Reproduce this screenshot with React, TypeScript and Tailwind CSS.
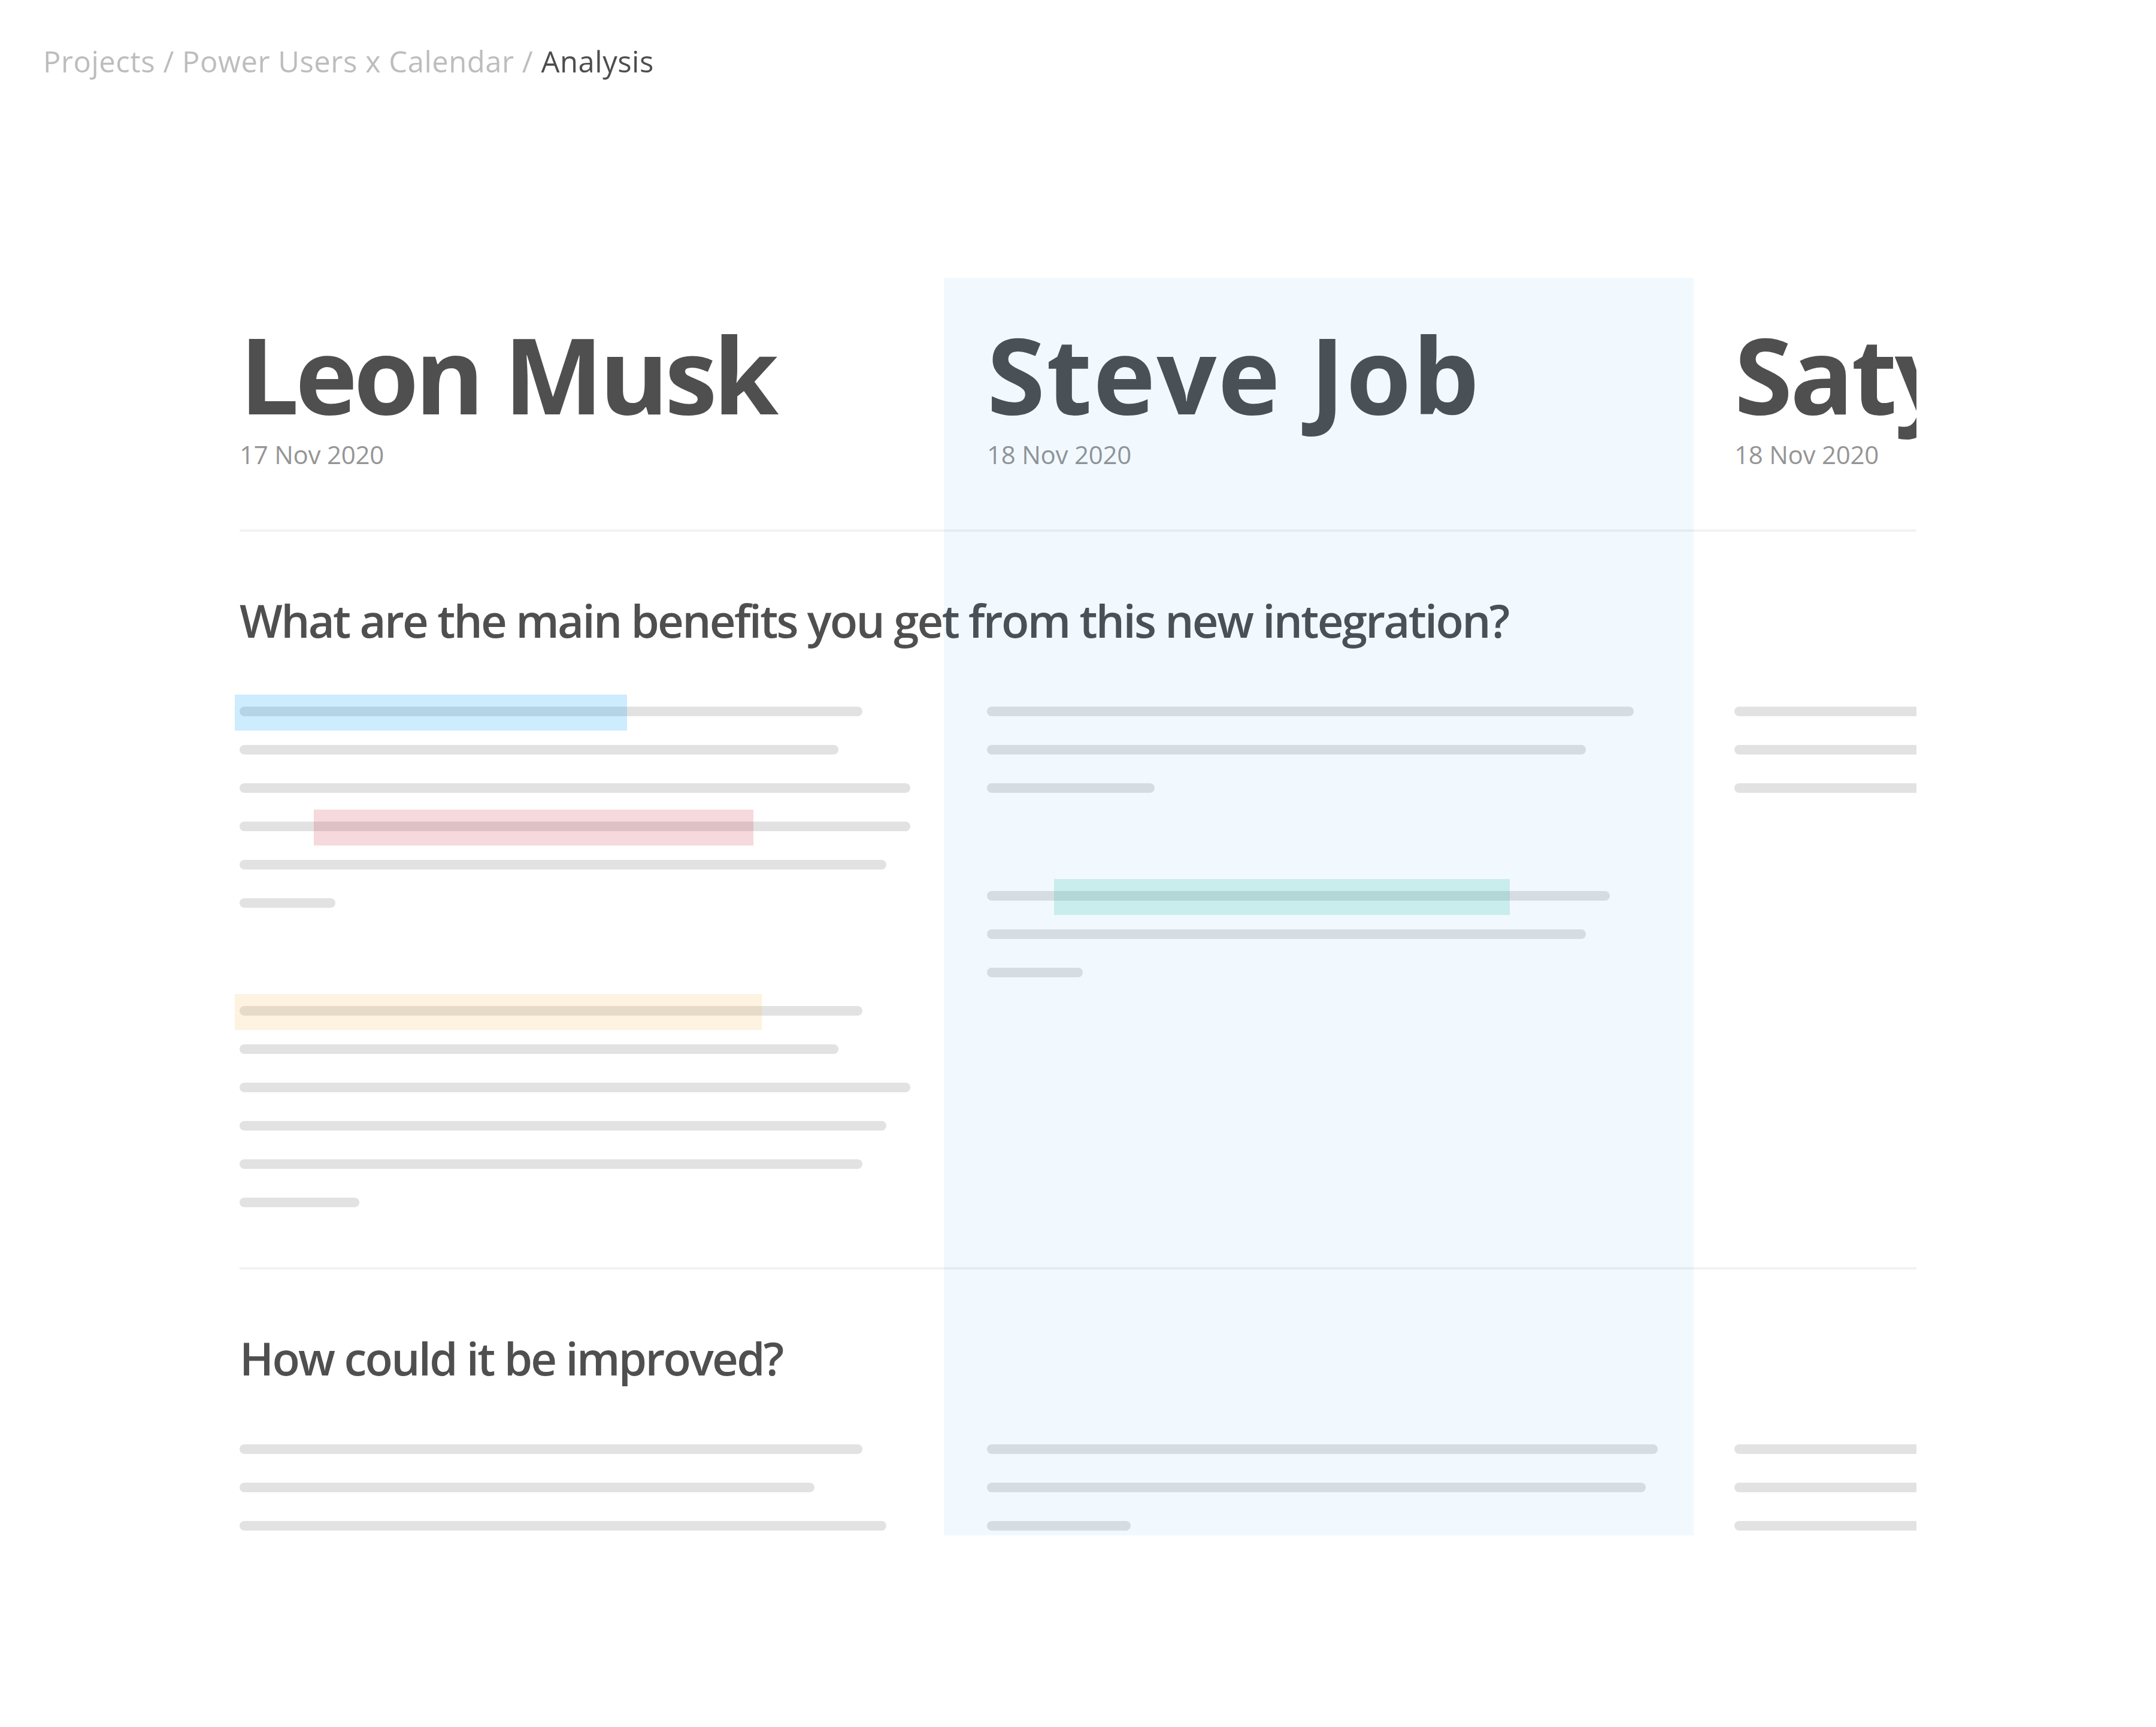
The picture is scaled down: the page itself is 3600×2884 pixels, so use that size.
import React from "react";

type HL = { line: number; left: number; width: number; color: string };
type Para = { widths: number[]; hl?: HL[] };

const FONT = { fontFamily: '"Open Sans", "Noto Sans", sans-serif' };

function Lines({ paras }: { paras: Para[] }) {
  return (
    <div className="flex flex-col gap-[164px]">
      {paras.map((p, pi) => (
        <div key={pi} className="flex flex-col gap-[48px]">
          {p.widths.map((w, li) => {
            const hls = (p.hl || []).filter((h) => h.line === li);
            return (
              <div key={li} className="relative h-[16px]">
                <div className="h-[16px] rounded-full bg-[#e2e2e2]" style={{ width: w }} />
                {hls.map((h, hi) => (
                  <div
                    key={hi}
                    className={`absolute top-[-20px] h-[60px] ${h.color}`}
                    style={{ left: h.left, width: h.width }}
                  />
                ))}
              </div>
            );
          })}
        </div>
      ))}
    </div>
  );
}

const people = [
  { name: "Leon Musk", date: "17 Nov 2020", pad: "pl-0", track: "tracking-[-6.5px]" },
  { name: "Steve Job", date: "18 Nov 2020", pad: "pl-[72px]", track: "tracking-[2px]" },
  { name: "Satya Nadella", date: "18 Nov 2020", pad: "pl-[68px]", track: "tracking-[-4px]" },
];

const sections: { q: string; cols: Para[][] }[] = [
  {
    q: "What are the main benefits you get from this new integration?",
    cols: [
      [
        {
          widths: [1040, 1000, 1120, 1120, 1080, 160],
          hl: [
            { line: 0, left: -8, width: 655, color: "bg-[rgba(5,160,245,0.2)]" },
            { line: 3, left: 124, width: 734, color: "bg-[rgba(210,65,80,0.2)]" },
          ],
        },
        {
          widths: [1040, 1000, 1120, 1080, 1040, 200],
          hl: [{ line: 0, left: -8, width: 880, color: "bg-[rgba(250,190,100,0.2)]" }],
        },
      ],
      [
        { widths: [1080, 1000, 280] },
        {
          widths: [1040, 1000, 160],
          hl: [{ line: 0, left: 112, width: 761, color: "bg-[rgba(60,195,170,0.22)]" }],
        },
      ],
      [{ widths: [1120, 1120, 1120] }],
    ],
  },
  {
    q: "How could it be improved?",
    cols: [
      [{ widths: [1040, 960, 1080] }],
      [{ widths: [1120, 1100, 240] }],
      [{ widths: [1120, 1120, 1120] }],
    ],
  },
];

export default function App() {
  return (
    <div className="min-h-[2884px] w-[3600px] bg-white" style={FONT}>
      <div className="pl-[72px] pt-[78px] text-[49px] leading-none tracking-[0.5px] whitespace-nowrap">
        <span className="text-[#bdbdbd]">Projects / Power Users x Calendar / </span>
        <span className="text-[#4d4d4d]">Analysis</span>
      </div>

      <div className="relative mt-[337px] ml-[380px] w-[2820px] overflow-hidden pl-[20px]">
        {/* header row */}
        <div className="grid grid-cols-[1176px_1252px_1252px] pb-[104px]">
          {people.map((p) => (
            <div key={p.name} className={`${p.pad} pt-[55px]`}>
              <div
                className={`text-[176px] font-bold leading-[1.2] ${p.track} text-[#4f4f4f] whitespace-nowrap`}
              >
                {p.name}
              </div>
              <div className="mt-[8px] text-[42px] leading-none tracking-[-0.25px] text-[#959595] whitespace-nowrap">
                {p.date}
              </div>
            </div>
          ))}
        </div>

        {sections.map((s, si) => (
          <div key={si}>
            <div className="h-[4px] bg-[#f2f2f2]" />
            <div className="pt-[110px] text-[76px] font-semibold leading-none tracking-[-2.7px] text-[#4f4f4f] whitespace-nowrap">
              {s.q}
            </div>
            <div
              className={`mt-[106px] grid grid-cols-[1176px_1252px_1252px] ${
                si === 0 ? "pb-[100px]" : "pb-[8px]"
              }`}
            >
              {s.cols.map((c, ci) => (
                <div key={ci} className={ci === 0 ? "pl-0" : ci === 1 ? "pl-[72px]" : "pl-[68px]"}>
                  <Lines paras={c} />
                </div>
              ))}
            </div>
          </div>
        ))}

        {/* selected column tint, laid over the content */}
        <div className="pointer-events-none absolute top-0 bottom-0 left-[1196px] w-[1252px] bg-[rgba(0,140,240,0.05)]" />
      </div>
    </div>
  );
}
